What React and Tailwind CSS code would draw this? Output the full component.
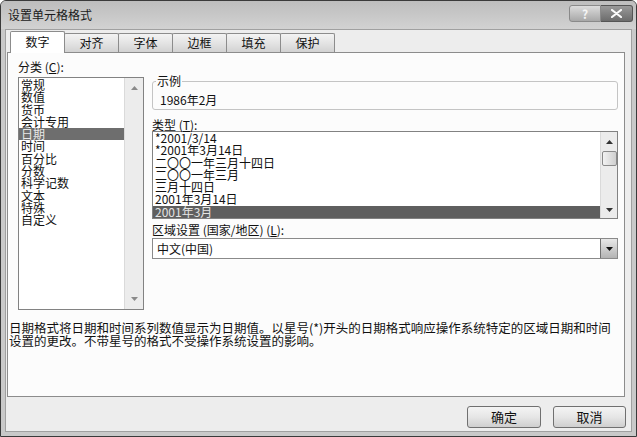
import React from 'react';

const categories = ['常规', '数值', '货币', '会计专用', '日期', '时间', '百分比', '分数', '科学记数', '文本', '特殊', '自定义'];
const types = ['*2001/3/14', '*2001年3月14日', '二〇〇一年三月十四日', '二〇〇一年三月', '三月十四日', '2001年3月14日', '2001年3月'];
const tabs = ['数字', '对齐', '字体', '边框', '填充', '保护'];

function Arrow({ up, color = '#555' }) {
  return (
    <svg width="7" height="4" viewBox="0 0 7 4">
      <path d={up ? 'M0 4 L3.5 0 L7 4Z' : 'M0 0 L3.5 4 L7 0Z'} fill={color} />
    </svg>
  );
}

function Button({ children, className = '' }) {
  return (
    <div className={`h-[22px] flex items-center justify-center rounded-[3px] border border-[#707070] bg-gradient-to-b from-[#f4f4f4] via-[#e6e6e6] to-[#cfcfcf] text-[13px] text-[#111] ${className}`}>
      {children}
    </div>
  );
}

export default function App() {
  return (
    <div className="w-[637px] h-[437px] bg-[#c9c9c9] border border-[#3a3a3a] rounded-t-[6px] flex flex-col font-['Noto_Sans_CJK_SC',sans-serif] text-[12px] text-[#111] overflow-hidden">
      {/* title bar */}
      <div className="h-[28px] flex pl-[7px] pr-[3px] bg-gradient-to-b from-[#bdbdbd] to-[#d2d2d2]">
        <div className="self-center leading-[14px] text-[12px] text-[#1a1a1a]">设置单元格格式</div>
        <div className="ml-auto mt-[4px] flex">
          <div className="w-[32px] h-[17px] rounded-l-[3px] border border-[#8a8a8a] bg-gradient-to-b from-[#dcdcdc] to-[#a8a8a8] flex items-center justify-center text-[12px] font-bold text-[#f5f5f5] leading-none">?</div>
          <div className="w-[32px] h-[17px] rounded-r-[3px] border border-[#555] border-l-0 bg-gradient-to-b from-[#9a9a9a] to-[#6c6c6c] flex items-center justify-center">
            <svg width="11" height="9" viewBox="0 0 11 9">
              <path d="M1 1 L10 8 M10 1 L1 8" stroke="#fafafa" strokeWidth="2.2" strokeLinecap="round" />
            </svg>
          </div>
        </div>
      </div>

      {/* client area */}
      <div className="mx-[4px] mb-[4px] flex-1 bg-[#ededed] border border-[#a0a0a0] flex flex-col">
        <div className="ml-[1px] mr-[6px]">
          {/* tabs */}
          <div className="h-[22px] flex items-end pl-[3px]">
            {tabs.map((t, i) =>
              i === 0 ? (
                <div key={t} className="relative z-10 w-[55px] h-[22px] -mb-px border border-b-0 border-[#8c8c8c] rounded-t-[2px] bg-white flex items-center justify-center pb-[1px] text-[12px]">
                  {t}
                </div>
              ) : (
                <div key={t} className="w-[55px] h-[19px] -ml-px border border-b-0 border-[#8c8c8c] rounded-t-[2px] bg-gradient-to-b from-[#f3f3f3] via-[#e4e4e4] to-[#d2d2d2] flex items-center justify-center text-[12px]">
                  {t}
                </div>
              )
            )}
          </div>

          {/* panel */}
          <div className="h-[345px] border border-[#8c8c8c] bg-[#fcfcfc]">
            <div className="flex pl-[10px] pt-[6px]">
              {/* left column */}
              <div className="w-[126px]">
                <div className="h-[18px] leading-[16px]">分类 (<span className="underline">C</span>):</div>
                <div className="h-[233px] border border-[#828282] bg-white flex">
                  <div className="flex-1 leading-[12.3px] text-[12px] pt-[1px]">
                    {categories.map((c) => (
                      <div key={c} className={c === '日期' ? 'bg-[#6e6e6e] text-[#e8e8e8] pl-[2px]' : 'pl-[2px]'}>
                        {c}
                      </div>
                    ))}
                  </div>
                  <div className="w-[19px] bg-[#ececec] border-l border-[#dadada] flex flex-col items-center justify-between py-[8px]">
                    <Arrow up color="#8a8a8a" />
                    <Arrow color="#8a8a8a" />
                  </div>
                </div>
              </div>

              {/* right column */}
              <div className="ml-[8px] w-[466px]">
                <div className="relative mt-[22px] h-[29px] border border-[#c4c4c4] rounded-[3px] pl-[7px] pt-[11px] leading-[14px]">
                  <span className="absolute left-[3px] top-[-9px] bg-[#fcfcfc] px-[1px] leading-[16px]">示例</span>
                  1986年2月
                </div>
                <div className="mt-[7px] h-[14px] leading-[16px]">类型 (<span className="underline">T</span>):</div>
                <div className="h-[88px] border border-[#828282] bg-white flex">
                  <div className="flex-1 leading-[12.3px] text-[12px]">
                    {types.map((t, i) => (
                      <div key={t} className={i === types.length - 1 ? 'bg-[#5f5f5f] text-[#e4e4e4] pl-[2px]' : 'pl-[2px]'}>
                        {t}
                      </div>
                    ))}
                  </div>
                  <div className="w-[17px] bg-[#ececec] border-l border-[#dadada] flex flex-col items-center pt-[8px] pb-[6px]">
                    <Arrow up color="#333" />
                    <div className="mt-[7px] w-[15px] h-[15px] rounded-[2px] border border-[#8a8a8a] bg-gradient-to-r from-[#f2f2f2] to-[#cfcfcf]" />
                    <div className="mt-auto">
                      <Arrow color="#333" />
                    </div>
                  </div>
                </div>
                <div className="mt-[3px] h-[16px] leading-[16px]">区域设置 (国家/地区) (<span className="underline">L</span>):</div>
                <div className="h-[21px] border border-[#8a8a8a] bg-white flex items-center">
                  <div className="flex-1 pl-[4px] leading-[14px]">中文(中国)</div>
                  <div className="w-[17px] h-[19px] border-l border-[#707070] bg-gradient-to-b from-[#e8e8e8] to-[#b4b4b4] flex items-center justify-center">
                    <Arrow color="#111" />
                  </div>
                </div>
              </div>
            </div>

            <div className="mt-[11px] pl-[1px] text-[12.5px] leading-[13px] whitespace-nowrap text-[#111]">
              日期格式将日期和时间系列数值显示为日期值。以星号(*)开头的日期格式响应操作系统特定的区域日期和时间
              <br />
              设置的更改。不带星号的格式不受操作系统设置的影响。
            </div>
          </div>
        </div>

        {/* buttons */}
        <div className="mt-[9px] mr-[5px] flex justify-end gap-[12px]">
          <Button className="w-[74px]">确定</Button>
          <Button className="w-[73px]">取消</Button>
        </div>
      </div>
    </div>
  );
}
